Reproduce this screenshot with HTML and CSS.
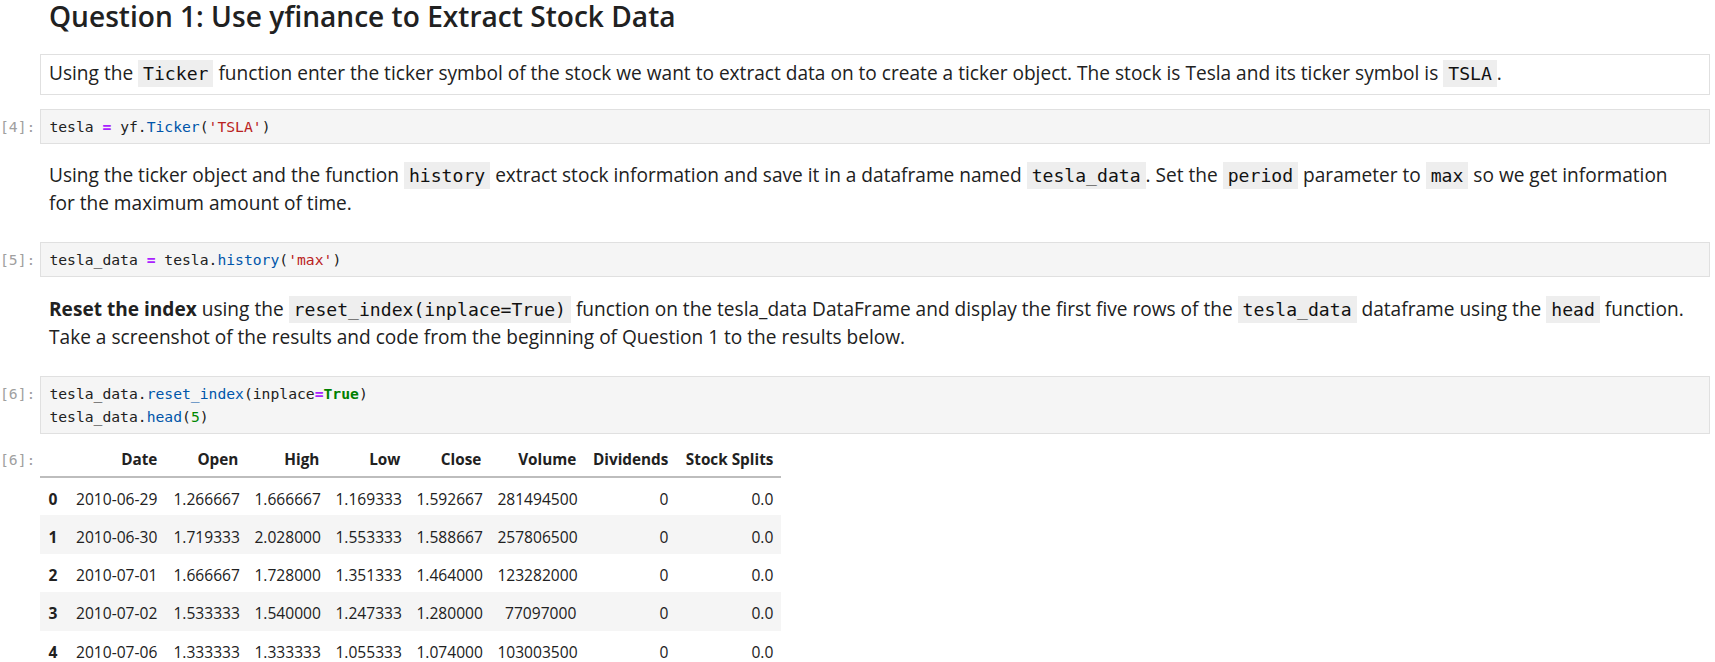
FILE: index.html
```html
<!DOCTYPE html>
<html lang="en">
<head>
<meta charset="utf-8">
<title>Question 1: Use yfinance to Extract Stock Data</title>
<link rel="stylesheet" href="styles.css">
</head>
<body>
<div class="notebook">

  <div class="cell cell-title">
    <div class="prompt"></div>
    <div class="md">
      <h2 class="heading">Question 1: Use yfinance to Extract Stock Data</h2>
    </div>
  </div>

  <div class="cell cell-md1">
    <div class="prompt"></div>
    <div class="md md-boxed">
      <p>Using the <code>Ticker</code> function enter the ticker symbol of the stock we want to extract data on to create a ticker object. The stock is Tesla and its ticker symbol is <code>TSLA</code>.</p>
    </div>
  </div>

  <div class="cell cell-code1">
    <div class="prompt">[4]:</div>
    <div class="editor"><pre><span class="v">tesla</span> <span class="op">=</span> <span class="v">yf</span>.<span class="pr">Ticker</span>(<span class="st">'TSLA'</span>)</pre></div>
  </div>

  <div class="cell cell-md2">
    <div class="prompt"></div>
    <div class="md">
      <p>Using the ticker object and the function <code>history</code> extract stock information and save it in a dataframe named <code>tesla_data</code>. Set the <code>period</code> parameter to <code>max</code> so we get information for the maximum amount of time.</p>
    </div>
  </div>

  <div class="cell cell-code2">
    <div class="prompt">[5]:</div>
    <div class="editor"><pre><span class="v">tesla_data</span> <span class="op">=</span> <span class="v">tesla</span>.<span class="pr">history</span>(<span class="st">'max'</span>)</pre></div>
  </div>

  <div class="cell cell-md3">
    <div class="prompt"></div>
    <div class="md">
      <p><strong>Reset the index</strong> using the <code>reset_index(inplace=True)</code> function on the tesla_data DataFrame and display the first five rows of the <code>tesla_data</code> dataframe using the <code>head</code> function. Take a screenshot of the results and code from the beginning of Question 1 to the results below.</p>
    </div>
  </div>

  <div class="cell cell-code3">
    <div class="prompt">[6]:</div>
    <div class="editor"><pre><span class="v">tesla_data</span>.<span class="pr">reset_index</span>(<span class="v">inplace</span><span class="op">=</span><span class="kw">True</span>)
<span class="v">tesla_data</span>.<span class="pr">head</span>(<span class="nm">5</span>)</pre></div>
  </div>

  <div class="cell cell-output">
    <div class="prompt prompt-out">[6]:</div>
    <div class="output">
      <table class="df">
        <colgroup>
          <col class="c-idx"><col class="c-date"><col class="c-num"><col class="c-num"><col class="c-num"><col class="c-num"><col class="c-vol"><col class="c-div"><col class="c-split">
        </colgroup>
        <thead>
          <tr><th></th><th>Date</th><th>Open</th><th>High</th><th>Low</th><th>Close</th><th>Volume</th><th>Dividends</th><th>Stock Splits</th></tr>
        </thead>
        <tbody>
          <tr><th>0</th><td>2010-06-29</td><td>1.266667</td><td>1.666667</td><td>1.169333</td><td>1.592667</td><td>281494500</td><td>0</td><td>0.0</td></tr>
          <tr><th>1</th><td>2010-06-30</td><td>1.719333</td><td>2.028000</td><td>1.553333</td><td>1.588667</td><td>257806500</td><td>0</td><td>0.0</td></tr>
          <tr><th>2</th><td>2010-07-01</td><td>1.666667</td><td>1.728000</td><td>1.351333</td><td>1.464000</td><td>123282000</td><td>0</td><td>0.0</td></tr>
          <tr><th>3</th><td>2010-07-02</td><td>1.533333</td><td>1.540000</td><td>1.247333</td><td>1.280000</td><td>77097000</td><td>0</td><td>0.0</td></tr>
          <tr><th>4</th><td>2010-07-06</td><td>1.333333</td><td>1.333333</td><td>1.055333</td><td>1.074000</td><td>103003500</td><td>0</td><td>0.0</td></tr>
        </tbody>
      </table>
    </div>
  </div>

</div>
</body>
</html>
```

FILE: styles.css
```css
html, body {
  margin: 0;
  padding: 0;
  background: #ffffff;
}

body {
  font-family: "Open Sans", "Noto Sans", sans-serif;
  color: #212121;
  overflow: hidden;
}

.notebook {
  padding: 0 5px 0 0;
}

.cell {
  display: flex;
  align-items: flex-start;
}

.prompt {
  flex: 0 0 40px;
  box-sizing: border-box;
  padding-right: 5px;
  text-align: right;
  font-family: "DejaVu Sans Mono", "Liberation Mono", monospace;
  font-size: 14.7px;
  line-height: 23px;
  color: #a0a0a0;
  white-space: nowrap;
}

.md, .editor, .output {
  flex: 1 1 auto;
  min-width: 0;
}

/* Markdown */
.md {
  padding: 0 18px 0 9px;
  font-size: 19.1px;
  line-height: 28px;
}

.md p {
  margin: 0;
}

.md-boxed {
  border: 1px solid #e0e0e0;
  padding: 4px 17px 7px 8px;
}

.heading {
  margin: 0;
  font-size: 28.1px;
  line-height: 32px;
  font-weight: 600;
  color: #212121;
}

.md code {
  font-family: "DejaVu Sans Mono", "Liberation Mono", monospace;
  font-size: 18.1px;
  line-height: 1;
  background: #eeeeee;
  padding: 3px 5px;
  color: #111;
}

.md strong {
  font-weight: 700;
}

/* Code editor */
.editor {
  background: #f5f5f5;
  border: 1px solid #e0e0e0;
  padding: 5px 8px 5px 8px;
}

.editor pre {
  margin: 0;
  font-family: "DejaVu Sans Mono", "Liberation Mono", monospace;
  font-size: 14.7px;
  line-height: 23px;
  color: #212121;
}

.cell-code1 .prompt,
.cell-code2 .prompt,
.cell-code3 .prompt {
  padding-top: 6px;
}

.v { color: #212121; }
.op { color: #aa22ff; font-weight: bold; }
.pr { color: #0055aa; }
.st { color: #ba2121; }
.kw { color: #008000; font-weight: bold; }
.nm { color: #008800; }

/* spacing between cells */
.cell-md1 { margin-top: 22px; }
.cell-code1 { margin-top: 14px; }
.cell-md2 { margin-top: 17px; }
.cell-code2 { margin-top: 25px; }
.cell-md3 { margin-top: 18px; }
.cell-code3 { margin-top: 25px; }
.cell-output { margin-top: 7px; }

.prompt-out {
  padding-top: 7px;
}

/* DataFrame table */
.df {
  width: 741px;
  border-collapse: collapse;
  border-spacing: 0;
  table-layout: fixed;
  font-size: 15.6px;
  color: #212121;
}

.c-idx { width: 26px; }
.c-date { width: 99px; }
.c-num { width: 81px; }
.c-vol { width: 95px; }
.c-div { width: 92px; }
.c-split { width: 105px; }

.df th, .df td {
  text-align: right;
  vertical-align: middle;
  padding: 4px 8px 0 8px;
  white-space: nowrap;
  line-height: 20px;
}

.df thead th {
  font-size: 15.3px;
  font-weight: 700;
  height: 35px;
  padding-top: 0;
  border-bottom: 2px solid #bdbdbd;
}

.df tbody th {
  font-weight: 700;
  text-align: left;
  padding-left: 8px;
}

.df tbody tr {
  height: 38.4px;
}

.df tbody tr:nth-child(even) {
  background: #f5f5f5;
}
```
